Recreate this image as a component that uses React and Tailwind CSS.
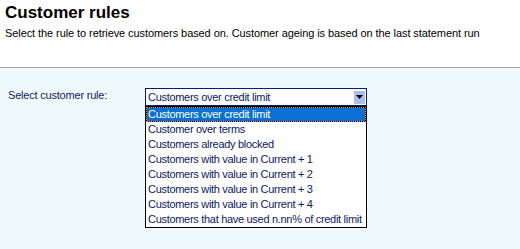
export default function App() {
  const items = [
    "Customer over terms",
    "Customers already blocked",
    "Customers with value in Current + 1",
    "Customers with value in Current + 2",
    "Customers with value in Current + 3",
    "Customers with value in Current + 4",
    "Customers that have used n.nn% of credit limit",
  ];
  const font = { fontFamily: '"Liberation Sans", Arial, sans-serif' };
  return (
    <div className="w-[520px] h-[249px] flex flex-col overflow-hidden" style={font}>
      <div className="h-[68px] shrink-0 bg-white px-[5px] pt-[4px] border-b border-[#a0a0a0]">
        <div className="text-[17px] leading-[18px] font-bold text-black">Customer rules</div>
        <div className="text-[11px] leading-[14px] mt-[4px] text-black tracking-[-0.08px] whitespace-nowrap">
          Select the rule to retrieve customers based on. Customer ageing is based on the last statement run
        </div>
      </div>
      <div className="flex-1 bg-[#f0f9fe] flex items-start pt-[20px] pl-[8px]">
        <div className="w-[137px] text-[11px] leading-[13px] pt-[1px] text-[#13245e] tracking-[-0.2px] whitespace-nowrap">Select customer rule:</div>
        <div className="w-[222px] flex flex-col">
          <div className="h-[18px] border border-[#0a1a78] bg-white flex items-center">
            <div className="flex-1 pl-[2px] text-[11px] leading-[13px] text-[#0a2064] tracking-[-0.3px] whitespace-nowrap">Customers over credit limit</div>
            <div className="w-[11px] h-[13px] mr-[1px] bg-[#a7bff1] flex items-center justify-center">
              <svg width="7" height="4" viewBox="0 0 7 4"><polygon points="0,0 7,0 3.5,4" fill="#000" /></svg>
            </div>
          </div>
          <div className="border border-black bg-white">
            <div className="bg-black">
              <div className="h-[15px] border border-dotted border-[#f79a2a] bg-[#0b70d3] bg-clip-padding flex items-center pl-[1px] text-[11px] leading-[13px] text-white tracking-[-0.3px] whitespace-nowrap">
                Customers over credit limit
              </div>
            </div>
            {items.map((t) => (
              <div key={t} className="h-[15px] flex items-center pl-[2px] text-[11px] leading-[13px] text-[#0a2064] tracking-[-0.3px] whitespace-nowrap">
                {t}
              </div>
            ))}
          </div>
        </div>
      </div>
    </div>
  );
}
